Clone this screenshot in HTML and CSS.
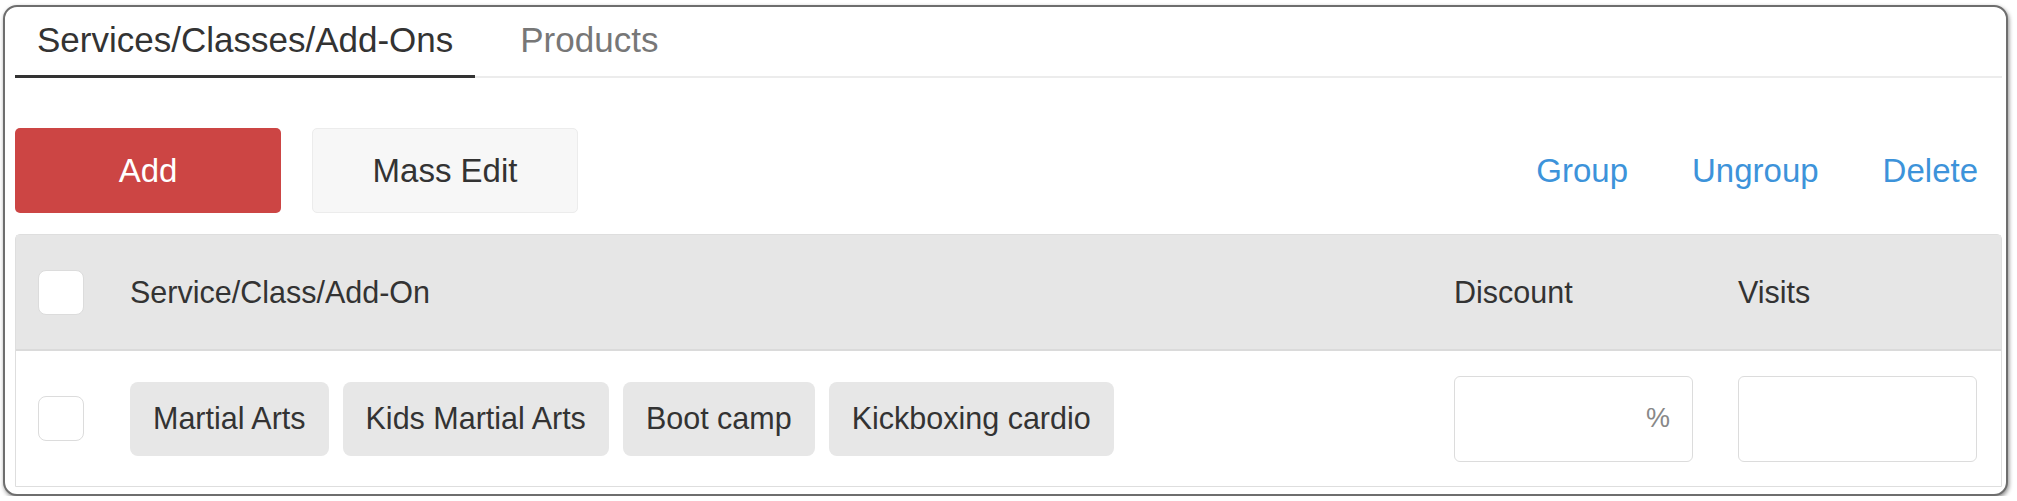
FILE: index.html
```html
<!DOCTYPE html>
<html>
<head>
<meta charset="utf-8">
<link rel="stylesheet" href="styles.css">
</head>
<body>
<div class="frame">
  <div class="tabs">
    <div class="tab active">Services/Classes/Add-Ons</div>
    <div class="tab">Products</div>
  </div>
  <div class="toolbar">
    <div class="btn btn-primary">Add</div>
    <div class="btn btn-default">Mass Edit</div>
    <div class="links">
      <span class="link">Group</span>
      <span class="link">Ungroup</span>
      <span class="link">Delete</span>
    </div>
  </div>
  <div class="table">
    <div class="row head">
      <div class="cell"><span class="check"></span></div>
      <div class="cell">Service/Class/Add-On</div>
      <div class="cell">Discount</div>
      <div class="cell">Visits</div>
    </div>
    <div class="row body">
      <div class="cell"><span class="check"></span></div>
      <div class="cell chips">
        <span class="chip">Martial Arts</span>
        <span class="chip">Kids Martial Arts</span>
        <span class="chip">Boot camp</span>
        <span class="chip">Kickboxing cardio</span>
      </div>
      <div class="cell"><div class="input pct">%</div></div>
      <div class="cell"><div class="input"></div></div>
    </div>
  </div>
</div>
</body>
</html>
```
FILE: styles.css
```css
* { box-sizing: border-box; }
html, body { margin: 0; padding: 0; background: #fff; }
body {
  font-family: "Liberation Sans", Arial, sans-serif;
  color: #333;
}
.frame {
  margin: 5px 0 0 3px;
  width: 2005px;
  border: 2px solid #6e6e6e;
  border-radius: 14px;
  box-shadow: 1px 2px 4px rgba(0,0,0,0.45);
  padding: 14px 4px 7px 10px;
  background: #fff;
}
.tabs {
  display: flex;
  border-bottom: 2px solid #ececec;
}
.tab {
  font-size: 35px;
  line-height: 38px;
  padding: 0 22px 16px 22px;
  margin-right: 23px;
  color: #777;
  margin-bottom: -2px;
  border-bottom: 3px solid transparent;
}
.tab.active {
  color: #333;
  border-bottom-color: #333;
}
.toolbar {
  display: flex;
  align-items: center;
  margin-top: 50px;
  padding-right: 24px;
}
.btn {
  width: 266px;
  height: 85px;
  display: flex;
  align-items: center;
  justify-content: center;
  font-size: 33px;
  border-radius: 5px;
}
.btn-primary {
  background: #cc4544;
  color: #fff;
  margin-right: 31px;
}
.btn-default {
  background: #f7f7f7;
  border: 1px solid #ececec;
  color: #333;
}
.links {
  margin-left: auto;
  display: flex;
  gap: 64px;
}
.link {
  font-size: 33px;
  color: #3d93da;
}
.table {
  margin-top: 21px;
  border: 1px solid #dedede;
  border-radius: 5px 5px 0 0;
}
.row {
  display: grid;
  grid-template-columns: 114px 1fr 284px 239px;
  padding-right: 24px;
  align-items: center;
}
.row.head {
  height: 116px;
  background: #e6e6e6;
  border-bottom: 2px solid #dadada;
  font-size: 30.5px;
  color: #333;
}
.row.body {
  height: 135px;
  background: #fff;
}
.cell:first-child { padding-left: 22px; display: flex; }
.check {
  display: block;
  width: 46px;
  height: 45px;
  background: #fff;
  border: 1px solid #dcdcdc;
  border-radius: 8px;
}
.chips {
  display: flex;
  gap: 14px;
}
.chip {
  height: 74px;
  display: flex;
  align-items: center;
  padding: 0 23px;
  background: #e7e7e7;
  border-radius: 8px;
  font-size: 30.5px;
  color: #333;
}
.input {
  width: 239px;
  height: 86px;
  border: 1px solid #dcdcdc;
  border-radius: 6px;
  background: #fff;
}
.input.pct {
  display: flex;
  align-items: center;
  justify-content: flex-end;
  padding-right: 22px;
  font-size: 27px;
  color: #888;
}
```
